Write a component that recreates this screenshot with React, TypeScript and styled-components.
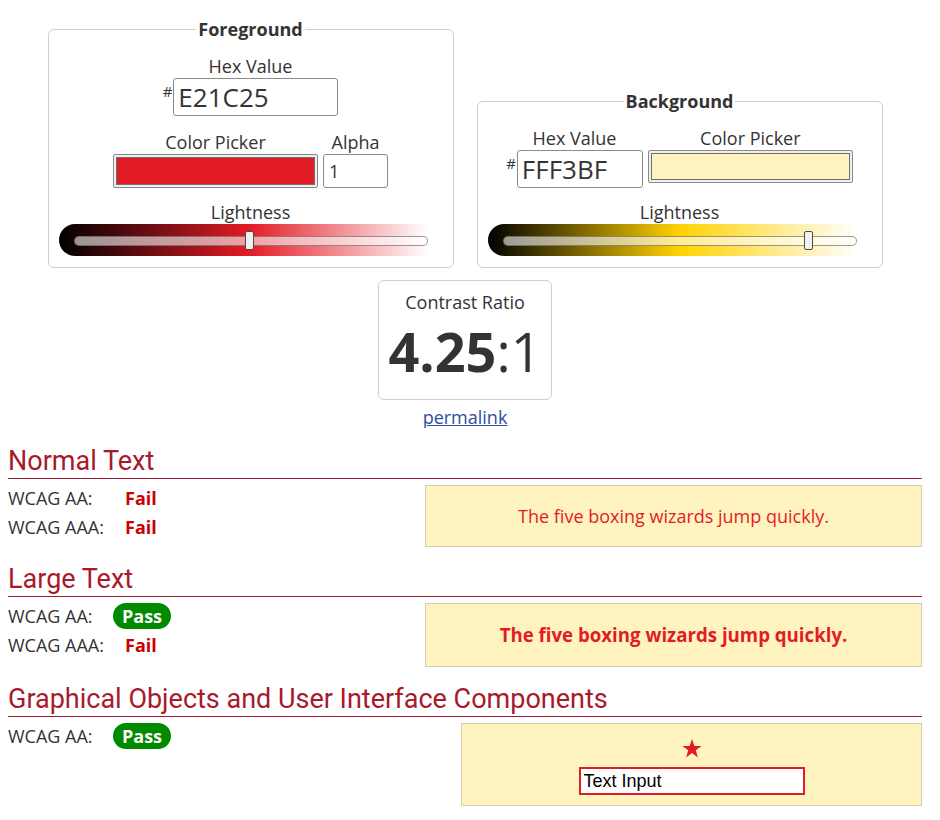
import styled, { createGlobalStyle } from "styled-components";

const GlobalStyle = createGlobalStyle`
  body {
    margin: 8px;
    background: #fff;
    color: #333;
    font-family: "Open Sans", sans-serif;
    font-size: 18px;
    line-height: 22px;
  }
  * { box-sizing: border-box; }
`;

interface ResultType {
  level: string
  pass: boolean
}

const normalResults: ResultType[] = [
  { level: "WCAG AA:", pass: false },
  { level: "WCAG AAA:", pass: false },
];
const largeResults: ResultType[] = [
  { level: "WCAG AA:", pass: true },
  { level: "WCAG AAA:", pass: false },
];
const graphicResults: ResultType[] = [{ level: "WCAG AA:", pass: true }];

function LightnessSlider({ color, value }: { color: string; value: number }) {
  return (
    <>
      <LightnessLabel>Lightness</LightnessLabel>
      <SliderWrap $color={color}>
        <Track>
          <Thumb style={{ left: `calc(${value} * (100% - 9px))` }} />
        </Track>
      </SliderWrap>
    </>
  );
}

function ResultList({ results }: { results: ResultType[] }) {
  return (
    <div>
      {results.map((r) => (
        <ResultRow key={r.level}>
          <RowLabel>{r.level}</RowLabel>
          <Status $pass={r.pass}>{r.pass ? "Pass" : "Fail"}</Status>
        </ResultRow>
      ))}
    </div>
  );
}

export default function App() {
  return (
    <Main>
      <GlobalStyle />
      <PickerRow>
        <Fieldset>
          <Legend>Foreground</Legend>
          <Column>
            <FieldLabel>Hex Value</FieldLabel>
            <HexField>
              <Hash>#</Hash>
              <HexInput $width={165} readOnly value="E21C25" />
            </HexField>
          </Column>
          <InputRow $top={15}>
            <Column>
              <FieldLabel>Color Picker</FieldLabel>
              <Swatch $height={34}>
                <SwatchFill $color="#e21c25" />
              </Swatch>
            </Column>
            <Column>
              <FieldLabel>Alpha</FieldLabel>
              <AlphaInput readOnly value="1" />
            </Column>
          </InputRow>
          <LightnessSlider color="#e21c25" value={0.498} />
        </Fieldset>

        <Fieldset>
          <Legend>Background</Legend>
          <InputRow $top={0}>
            <Column>
              <FieldLabel>Hex Value</FieldLabel>
              <HexField>
                <Hash>#</Hash>
                <HexInput $width={126} readOnly value="FFF3BF" />
              </HexField>
            </Column>
            <Column>
              <FieldLabel>Color Picker</FieldLabel>
              <Swatch $height={33}>
                <SwatchFill $color="#fff3bf" />
              </Swatch>
            </Column>
          </InputRow>
          <LightnessSlider color="#ffd100" value={0.875} />
        </Fieldset>
      </PickerRow>

      <RatioBox>
        <RatioLabel>Contrast Ratio</RatioLabel>
        <RatioValue>
          <b>4.25</b>:1
        </RatioValue>
      </RatioBox>
      <Permalink href="#">permalink</Permalink>

      <Section>
        <SectionTitle>Normal Text</SectionTitle>
        <SectionBody>
          <ResultList results={normalResults} />
          <SampleBox $width={497}>The five boxing wizards jump quickly.</SampleBox>
        </SectionBody>
      </Section>

      <Section>
        <SectionTitle>Large Text</SectionTitle>
        <SectionBody>
          <ResultList results={largeResults} />
          <SampleBox $width={497} $large>
            The five boxing wizards jump quickly.
          </SampleBox>
        </SectionBody>
      </Section>

      <Section>
        <SectionTitle>Graphical Objects and User Interface Components</SectionTitle>
        <SectionBody>
          <ResultList results={graphicResults} />
          <GraphicBox $width={461}>
            <svg width="20" height="20" viewBox="0 0 20 20">
              <polygon
                fill="#e21c25"
                points="10,0 12.4,6.9 19.5,6.9 13.8,11.2 15.9,18.5 10,14.1 4.1,18.5 6.2,11.2 0.5,6.9 7.6,6.9"
              />
            </svg>
            <SampleInput readOnly value="Text Input" />
          </GraphicBox>
        </SectionBody>
      </Section>
    </Main>
  );
}

const Main = styled.div`
width: 914px;
`

const PickerRow = styled.div`
display: flex;
justify-content: center;
align-items: flex-end;
gap: 23px;
margin-top: 10px;
`

const Fieldset = styled.fieldset`
width: 406px;
min-width: 0;
margin: 0;
padding: 15px 10px 11px;
border: 1px solid #cfcfcf;
border-radius: 6px;
`

const Legend = styled.legend`
margin: 0 auto;
padding: 0 2px;
font-weight: 700;
line-height: 22px;
`

const Column = styled.div`
display: flex;
flex-direction: column;
align-items: center;
`

const FieldLabel = styled.div`
text-align: center;
margin-bottom: 1px;
`

const InputRow = styled.div<{ $top: number }>`
display: flex;
justify-content: center;
align-items: flex-start;
gap: 5px;
margin-top: ${(p) => p.$top}px;
`

const HexField = styled.div`
display: flex;
align-items: flex-start;
`

const Hash = styled.span`
font-size: 15px;
line-height: 15px;
margin: 6px 1px 0 0;
`

const HexInput = styled.input<{ $width: number }>`
width: ${(p) => p.$width}px;
height: 38px;
padding: 0 4px;
border: 1px solid #8a8a8a;
border-radius: 3px;
font-family: "Open Sans", sans-serif;
font-size: 26px;
color: #333;
outline: none;
`

const Swatch = styled.div<{ $height: number }>`
width: 205px;
height: ${(p) => p.$height}px;
padding: 2px;
border: 1px solid #8a8a8a;
border-radius: 2px;
background: #efefef;
`

const SwatchFill = styled.div<{ $color: string }>`
height: 100%;
border: 1px solid #6f6f6f;
background: ${(p) => p.$color};
`

const AlphaInput = styled.input`
width: 65px;
height: 34px;
padding: 0 5px;
border: 1px solid #8a8a8a;
border-radius: 3px;
font-family: "Open Sans", sans-serif;
font-size: 18px;
color: #333;
outline: none;
`

const LightnessLabel = styled.div`
margin-top: 13px;
text-align: center;
`

const SliderWrap = styled.div<{ $color: string }>`
width: 380px;
height: 32px;
margin-top: 1px;
padding: 12px 11px 10px 15px;
border-radius: 16px;
background: linear-gradient(to right, #000 0%, ${(p) => p.$color} 50%, #fff 97%);
`

const Track = styled.div`
position: relative;
height: 10px;
border: 1px solid rgba(70, 70, 70, 0.55);
border-radius: 5px;
background: rgba(255, 255, 255, 0.58);
`

const Thumb = styled.div`
position: absolute;
top: -6px;
width: 9px;
height: 19px;
border: 1px solid #4a4a4a;
border-radius: 2px;
background: #f1f1f1;
`

const RatioBox = styled.div`
width: 174px;
margin: 12px auto 0;
padding: 10px 0 20px;
border: 1px solid #cfcfcf;
border-radius: 6px;
text-align: center;
`

const RatioLabel = styled.div`
margin-bottom: 10px;
`

const RatioValue = styled.div`
font-size: 54px;
line-height: 56px;
& b {
  font-weight: 700;
}
`

const Permalink = styled.a`
display: block;
width: max-content;
margin: 5px auto 0;
font-size: 18px;
line-height: 25px;
color: #2b4ea2;
`

const Section = styled.section`
margin-top: 17px;
&:first-of-type {
  margin-top: 16px;
}
`

const SectionTitle = styled.h2`
margin: 0;
padding-bottom: 2px;
font-family: Roboto, sans-serif;
font-size: 27px;
line-height: 30px;
font-weight: 400;
color: #a8192c;
border-bottom: 1px solid #a11d33;
`

const SectionBody = styled.div`
display: flex;
justify-content: space-between;
align-items: flex-start;
margin-top: 4px;
`

const ResultRow = styled.div`
display: flex;
align-items: center;
height: 29px;
`

const RowLabel = styled.span`
width: 105px;
`

const Status = styled.span<{ $pass: boolean }>`
padding: ${(p) => (p.$pass ? "0 9px" : "0 12px")};
line-height: 26px;
border-radius: 13px;
font-weight: 700;
color: ${(p) => (p.$pass ? "#fff" : "#c00")};
background: ${(p) => (p.$pass ? "#008a00" : "transparent")};
`

const SampleBox = styled.div<{ $width: number; $large?: boolean }>`
width: ${(p) => p.$width}px;
margin-top: 2px;
padding: 19px 10px;
border: 1px solid #d3cdb4;
background: #fff3bf;
text-align: center;
color: #e21c25;
font-size: ${(p) => (p.$large ? "18.66px" : "18px")};
font-weight: ${(p) => (p.$large ? 700 : 400)};
line-height: ${(p) => (p.$large ? "24px" : "22px")};
`

const GraphicBox = styled(SampleBox)`
display: flex;
flex-direction: column;
align-items: center;
gap: 8px;
padding: 15px 10px 10px;
& svg {
  display: block;
}
`

const SampleInput = styled.input`
width: 226px;
height: 28px;
padding: 0 3px;
border: 2px solid #e21c25;
background: #fff;
color: #000;
font-family: "Liberation Sans", Arial, sans-serif;
font-size: 18px;
outline: none;
`
